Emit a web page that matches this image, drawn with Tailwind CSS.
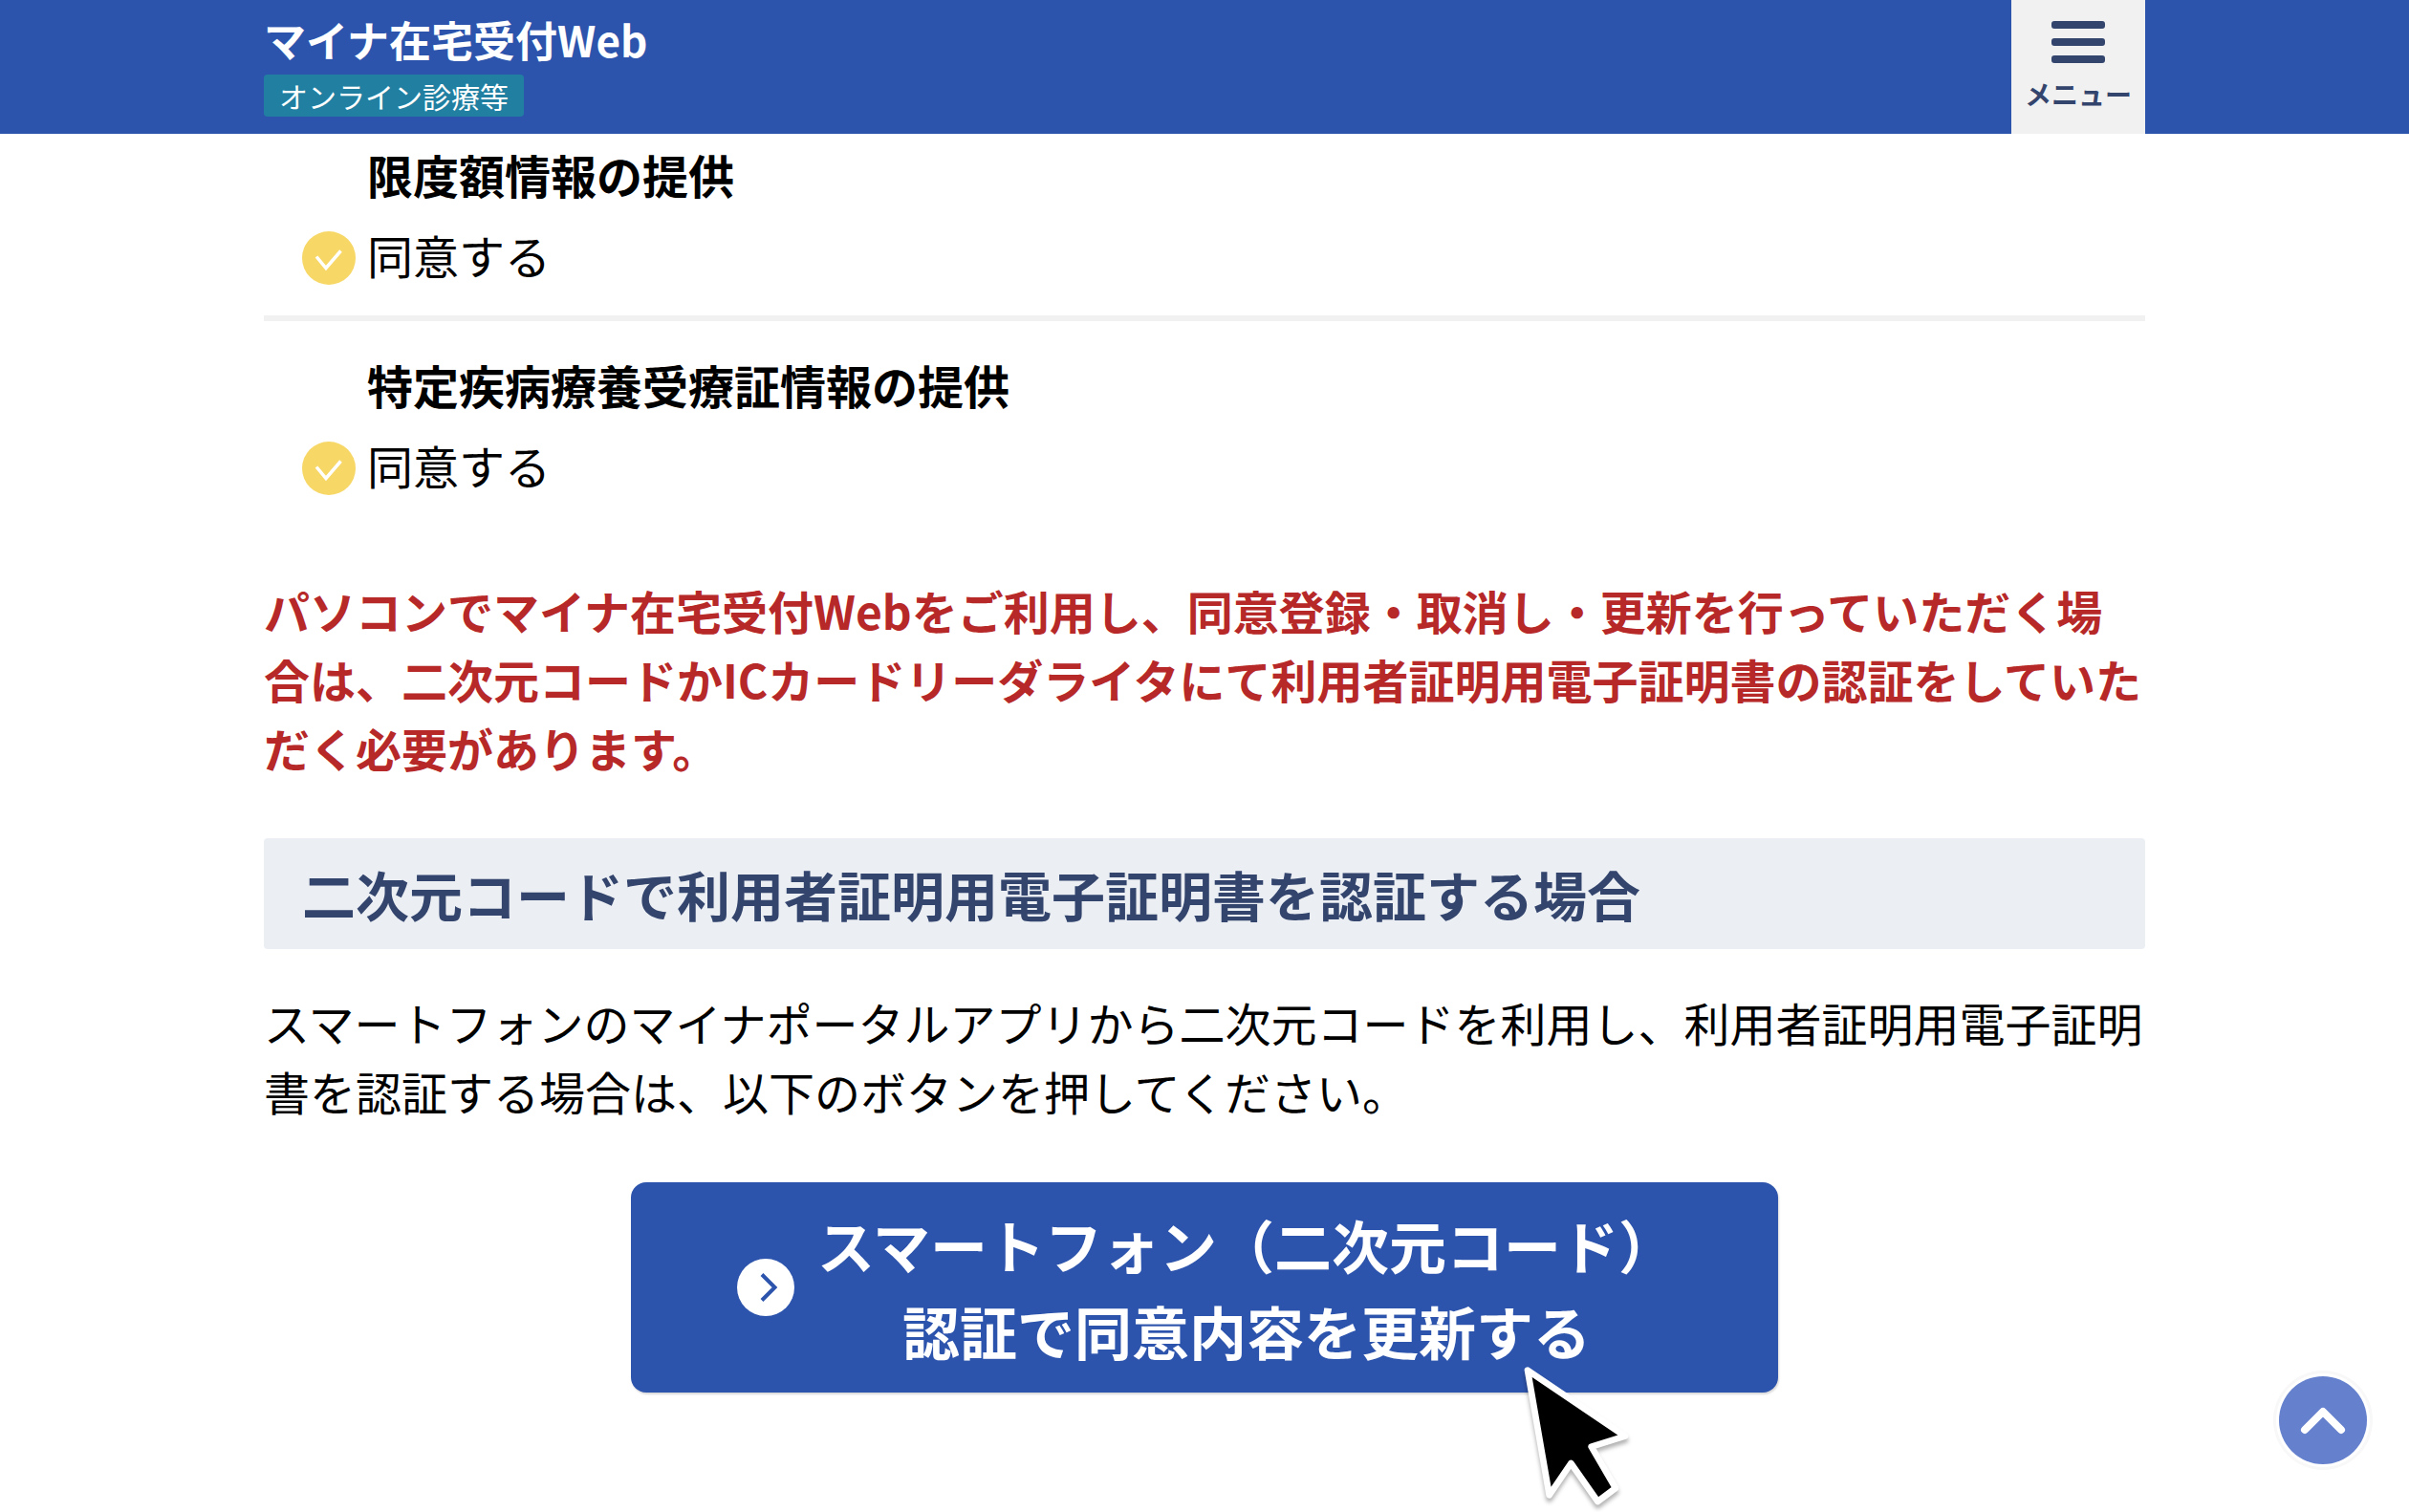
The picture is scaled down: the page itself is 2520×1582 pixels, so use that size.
<!DOCTYPE html>
<html lang="ja">
<head>
<meta charset="utf-8">
<meta name="viewport" content="width=device-width, initial-scale=1">
<title>マイナ在宅受付Web</title>
<script src="https://cdn.jsdelivr.net/npm/@tailwindcss/browser@4"></script>
</head>
<body class="min-h-screen bg-white font-['Noto_Sans_CJK_JP',sans-serif] text-[48px] leading-[72px] text-black">

<header class="sticky top-0 z-10 bg-[#2d54ac]">
  <div class="mx-auto flex h-[140px] max-w-[1968px] justify-between">
    <div class="flex flex-col items-start pt-2 text-white">
      <a href="#" class="text-[44px] leading-[66px] font-bold">マイナ在宅受付Web</a>
      <span class="mt-1 rounded bg-[#2180a1] px-4 text-[30px] leading-[44px]">オンライン診療等</span>
    </div>
    <button type="button" class="flex w-[140px] flex-col items-center bg-[#f1f1f1] pt-[22px] text-[#33446d]">
      <svg class="h-11 w-14" viewBox="0 0 56 44" fill="currentColor" aria-hidden="true">
        <rect width="56" height="8" rx="3"/>
        <rect y="18" width="56" height="8" rx="3"/>
        <rect y="36" width="56" height="8" rx="3"/>
      </svg>
      <span class="mt-3 text-[28px] leading-[40px] font-bold">メニュー</span>
    </button>
  </div>
</header>

<main class="mx-auto max-w-[1968px]">
  <dl>
    <div class="border-b-6 border-[#f1f1f1] pt-1.5 pb-7">
      <dt class="pl-[108px] font-bold">限度額情報の提供</dt>
      <dd class="mt-3 flex items-start gap-3 pl-10">
        <svg class="mt-3 size-14" viewBox="0 0 56 56" fill="none" aria-hidden="true">
          <circle cx="28" cy="28" r="28" fill="#f7d766"/>
          <path d="M15 26.500L25 38.500L40.500 20.500" stroke="#fff" stroke-width="3.500"/>
        </svg>
        同意する
      </dd>
    </div>
    <div class="pt-[30px]">
      <dt class="pl-[108px] font-bold">特定疾病療養受療証情報の提供</dt>
      <dd class="mt-3 flex items-start gap-3 pl-10">
        <svg class="mt-3 size-14" viewBox="0 0 56 56" fill="none" aria-hidden="true">
          <circle cx="28" cy="28" r="28" fill="#f7d766"/>
          <path d="M15 26.500L25 38.500L40.500 20.500" stroke="#fff" stroke-width="3.500"/>
        </svg>
        同意する
      </dd>
    </div>
  </dl>

  <p class="mt-20 font-bold text-[#b72828]">パソコンでマイナ在宅受付Webをご利用し、同意登録・取消し・更新を行っていただく場合は、二次元コードかICカードリーダライタにて利用者証明用電子証明書の認証をしていただく必要があります。</p>

  <h2 class="mt-[59px] rounded bg-[#ebeff4] px-10 py-4 text-[56px] leading-[84px] font-bold text-[#33446d]">二次元コードで利用者証明用電子証明書を認証する場合</h2>

  <p class="mt-10">スマートフォンのマイナポータルアプリから二次元コードを利用し、利用者証明用電子証明書を認証する場合は、以下のボタンを押してください。</p>

  <button type="button" class="relative mx-auto mt-15 mb-[124px] flex w-full max-w-[1200px] items-center justify-center gap-6 rounded-2xl bg-[#2d54ac] py-5 pl-1 text-[60px] leading-[90px] font-bold text-white shadow-[1px_2px_2px_rgba(0,0,0,0.15)]">
    <svg class="size-[60px] shrink-0" viewBox="0 0 60 60" fill="none" aria-hidden="true">
      <circle cx="30" cy="30" r="30" fill="#fff"/>
      <path d="M26 16.500L39.500 30L26 43.500" stroke="#2d54ac" stroke-width="4"/>
    </svg>
    <span>スマートフォン（二次元コード）<br>認証で同意内容を更新する</span>
    <svg class="absolute top-[184px] left-[924px] h-[174px] w-[130px] drop-shadow-[0_4px_2px_rgba(0,0,0,0.3)]" viewBox="72 600 390 522" aria-hidden="true">
      <path d="M114 638L420 845L314 878L390 1008L334 1050L250 930L182 1030Z" fill="#000" stroke="#fff" stroke-width="20" stroke-linejoin="round"/>
    </svg>
  </button>
</main>

<a href="#" aria-label="ページの先頭へ" class="fixed right-11 bottom-[50px] flex size-[92px] items-center justify-center rounded-full bg-[#6581ce] shadow-[0_0_0_3px_#fff,0_0_0_6px_#f8f8f8]">
  <svg class="size-[92px]" viewBox="0 0 92 92" fill="none" aria-hidden="true">
    <path d="M27 56L46 37L65 56" stroke="#fff" stroke-width="8" stroke-linecap="round" stroke-linejoin="round"/>
  </svg>
</a>

</body>
</html>
